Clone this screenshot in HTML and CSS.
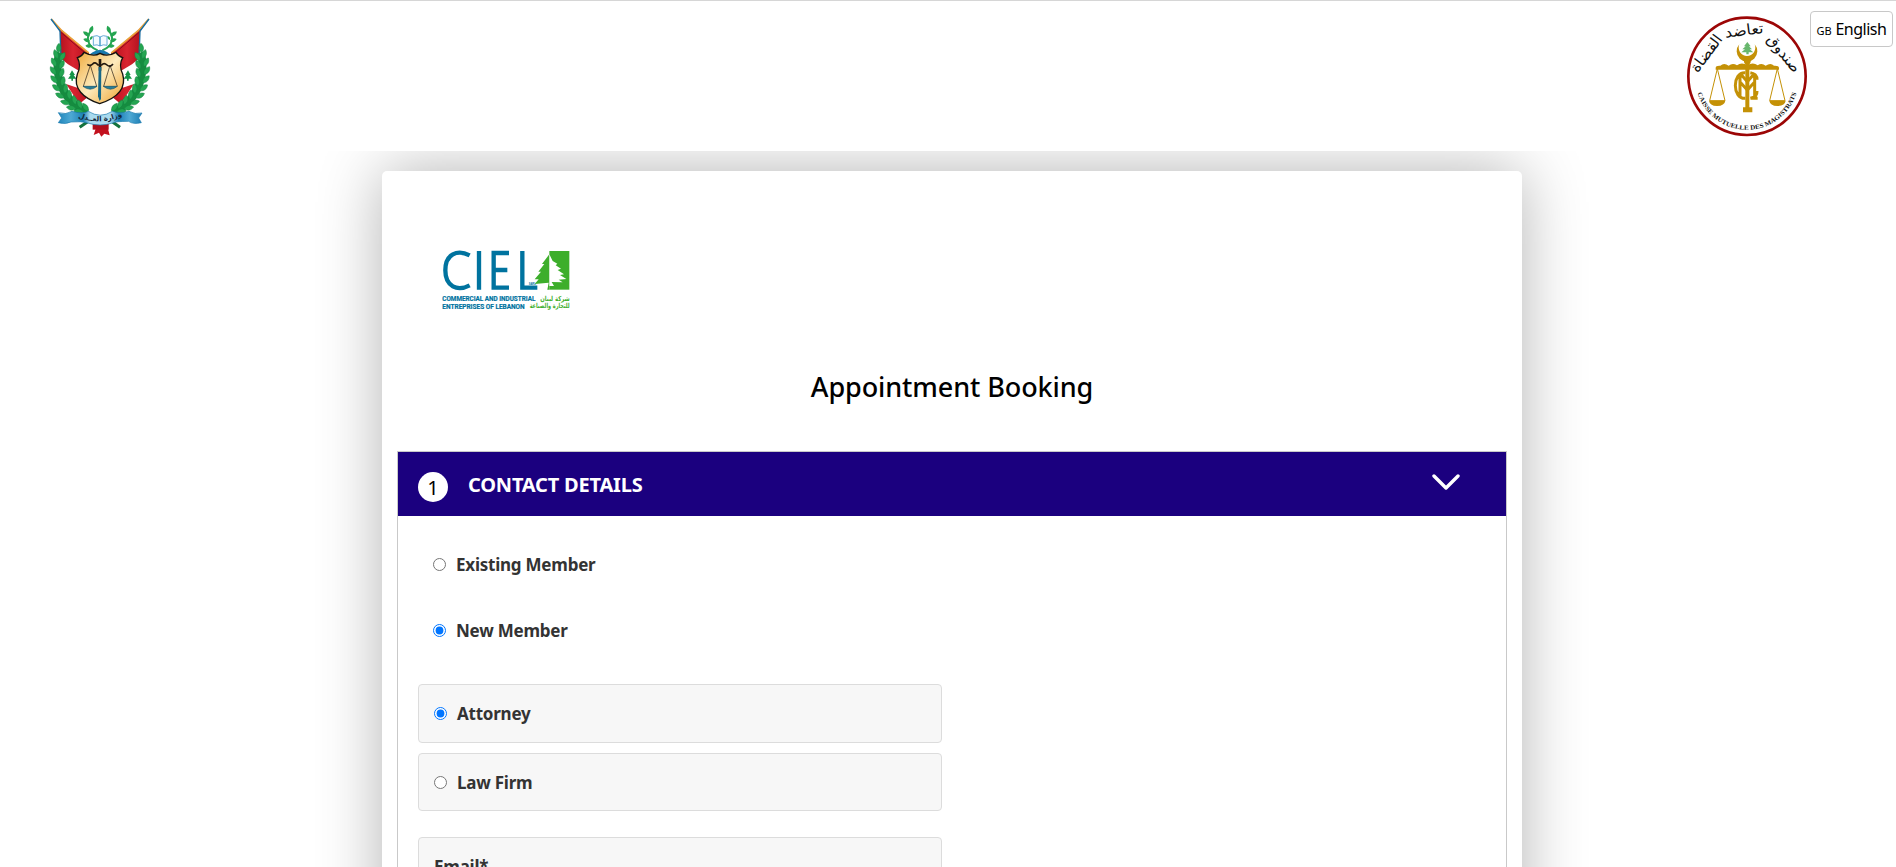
FILE: index.html
```
<!DOCTYPE html>
<html lang="en">
<head>
<meta charset="utf-8">
<title>Appointment Booking</title>
<link rel="stylesheet" href="styles.css">
</head>
<body>
<header class="topbar">
  <svg class="ministry" viewBox="0 0 360 405" aria-label="Ministry of Justice">
    <defs>
      <linearGradient id="gold" x1="0" y1="0" x2="1" y2="1"><stop offset="0" stop-color="#f0a93a"/><stop offset=".5" stop-color="#fdebbd"/><stop offset="1" stop-color="#efa22e"/></linearGradient>
      <linearGradient id="red" x1="0" y1="0" x2="1" y2="0"><stop offset="0" stop-color="#a80d19"/><stop offset=".5" stop-color="#d82430"/><stop offset="1" stop-color="#b40e1c"/></linearGradient>
      <linearGradient id="ribbon" x1="0" y1="0" x2="1" y2="0"><stop offset="0" stop-color="#2187bd"/><stop offset=".15" stop-color="#4ea9d4"/><stop offset=".3" stop-color="#1d80b6"/><stop offset=".38" stop-color="#a9daee"/><stop offset=".62" stop-color="#a9daee"/><stop offset=".72" stop-color="#1d80b6"/><stop offset=".85" stop-color="#4ea9d4"/><stop offset="1" stop-color="#1c7db4"/></linearGradient>
      <path id="leaf" d="M0 12C-9 3-9-8 0-17C9-8 9 3 0 12Z"/>
      <g id="half">
        <path d="M48 46L62 60L146 132L150 150L148 260L118 285L62 200L60 70Z" fill="url(#red)"/>
        <path d="M62 148L84 166L114 184L112 236L62 220Z" fill="#fff"/>
        <path d="M34 30L62 62L146 132" fill="none" stroke="#e9a23a" stroke-width="5"/>
        <path d="M60 68L142 138" fill="none" stroke="#8c0f18" stroke-width="3"/>
        <path d="M33 30L60 66L63 150" fill="none" stroke="#166da2" stroke-width="4"/>
        <path d="M96 184L88 198H92L84 209H94V215H99V209H109L101 198H105Z" fill="#159447"/>
        <path d="M57 130C44 190 56 265 140 312" fill="none" stroke="#168c3f" stroke-width="24"/>
        <g fill="#24a551" stroke="#128541" stroke-width="1.5" transform="translate(5 0)">
          <use href="#leaf" transform="translate(51 120) rotate(4)"/>
          <use href="#leaf" transform="translate(44 138) rotate(-20)"/><use href="#leaf" transform="translate(61 145) rotate(30)"/>
          <use href="#leaf" transform="translate(38 162) rotate(-28)"/><use href="#leaf" transform="translate(59 169) rotate(26)"/>
          <use href="#leaf" transform="translate(36 187) rotate(-35)"/><use href="#leaf" transform="translate(59 194) rotate(20)"/>
          <use href="#leaf" transform="translate(39 213) rotate(-43)"/><use href="#leaf" transform="translate(63 219) rotate(12)"/>
          <use href="#leaf" transform="translate(46 238) rotate(-53)"/><use href="#leaf" transform="translate(71 241) rotate(5)"/>
          <use href="#leaf" transform="translate(57 261) rotate(-63)"/><use href="#leaf" transform="translate(83 259) rotate(-5)"/>
          <use href="#leaf" transform="translate(73 281) rotate(-73)"/><use href="#leaf" transform="translate(99 275) rotate(-15)"/>
          <use href="#leaf" transform="translate(91 297) rotate(-80)"/><use href="#leaf" transform="translate(115 288) rotate(-25)"/>
          <use href="#leaf" transform="translate(113 307) rotate(-85)"/><use href="#leaf" transform="translate(133 297) rotate(-35)"/>
        </g>
        <path d="M154 64C137 84 140 112 173 124" fill="none" stroke="#25a553" stroke-width="6"/>
        <g fill="#24a551"><use href="#leaf" transform="translate(153 64) rotate(20) scale(.85)"/><use href="#leaf" transform="translate(141 76) rotate(-55) scale(.85)"/><use href="#leaf" transform="translate(142 94) rotate(-70) scale(.75)"/><use href="#leaf" transform="translate(149 111) rotate(-85) scale(.75)"/><use href="#leaf" transform="translate(153 88) rotate(35) scale(.5)"/></g>
      </g>
    </defs>
    <use href="#half"/><use href="#half" transform="translate(360 0) scale(-1 1)"/>
    <path d="M160 82Q172 77 180 84Q189 77 201 82V109Q189 105 180 111Q172 105 160 109Z" fill="#f4fbff" stroke="#68acd8" stroke-width="3"/><path d="M180 84V111" stroke="#3993c7" stroke-width="4"/>
    <path d="M158 130Q180 115 202 130L215 139L180 135L145 139Z" fill="#1878ae"/>
    <path d="M112 146Q126 142 132 130Q160 145 180 133Q202 145 228 130Q235 142 248 146Q235 169 248 195C260 238 231 267 179 284C130 268 98 238 112 195Q125 169 112 146Z" fill="url(#gold)" stroke="#141310" stroke-width="4"/>
    <g fill="none" stroke="#21180f" stroke-width="5"><path d="M142 166Q151 173 158 165T174 168H185Q192 160 201 168T219 165"/><path d="M180 150V185" stroke-width="8"/><path d="M151 169L130 232M151 169L170 232M210 169L191 232M210 169L232 232" stroke-width="2"/></g>
    <path d="M176 174L184 174L183 270L179 276L174 262Z" fill="#176887"/><path d="M129 232H171Q151 249 129 232ZM190 232H232Q212 249 190 232Z" fill="#26809b" stroke="#114c65" stroke-width="2"/>
    <path d="M119 355L156 329M240 355L204 329" stroke="#14723d" stroke-width="9"/>
    <path d="M172 344L161 378L177 371L184 383L193 374L209 379L200 344Z" fill="#c3111e"/><path d="M158 344H206V362H158Z" fill="#b00f1b"/>
    <path d="M55 311Q78 318 96 307Q128 316 145 307Q181 330 217 307Q239 316 267 307Q285 317 306 312L296 327L304 341Q279 347 266 337Q227 337 218 342Q180 354 143 342Q124 336 93 339Q77 347 55 341L65 327Z" fill="url(#ribbon)" stroke="#1879ad" stroke-width="2"/>
    <path id="ministryLine" d="M117 326Q180 350 244 322" fill="none"/>
    <text class="ministry-name"><textPath href="#ministryLine" startOffset="50%" text-anchor="middle">وزارة العــدل</textPath></text>
  </svg>
  <svg class="mutual" viewBox="0 0 390 405" aria-label="Caisse Mutuelle des Magistrats">
    <defs><path id="arcBottom" d="M47 222A155 155 0 0 0 355 222"/></defs>
    <circle cx="201" cy="199" r="176" fill="#fff" stroke="#9c0606" stroke-width="8"/>
    <g class="arc-ar" text-anchor="middle">
      <text transform="translate(300 140) rotate(51)" textLength="132" lengthAdjust="spacingAndGlyphs">صندوق</text>
      <text transform="translate(194 76) rotate(-7)" textLength="116" lengthAdjust="spacingAndGlyphs">تعاضد</text>
      <text transform="translate(91 139) rotate(-53)" textLength="128" lengthAdjust="spacingAndGlyphs">القضاة</text>
    </g>
    <text class="arc-fr"><textPath href="#arcBottom" startOffset="50%" text-anchor="middle" textLength="396" lengthAdjust="spacingAndGlyphs">CAISSE MUTUELLE DES MAGISTRATS</textPath></text>
    <path d="M178 103A31 31 0 1 0 224 103A25 25 0 1 1 178 103Z" fill="#c49106"/>
    <path d="M202 96L192 109H197L187 118H195L184 127H199V133H206V127H220L209 118H216L207 109H212Z" fill="#68b76d"/>
    <g fill="#c49106"><circle cx="202" cy="154" r="10"/><path d="M107 174Q107 166 121 167Q132 157 146 167Q158 157 171 166Q184 155 202 165Q220 155 233 166Q245 157 257 167Q272 157 282 167Q297 166 297 174V179H107Z"/><path d="M196 160H208V292H217V307H189V292H196Z"/><path d="M87 272H136Q134 287 111 288Q89 287 87 272ZM268 272H317Q315 287 292 288Q270 287 268 272Z"/></g>
    <g fill="none" stroke="#c49106" stroke-width="3"><path d="M112 176L89 272H135L112 176M292 176L269 272H315L292 176"/></g>
    <g fill="none" stroke="#c49106" stroke-width="9"><path d="M196 188C156 185 156 268 196 265M180 190V263M224 190V265M180 190L202 215L224 190M180 216L202 240L224 216M211 188Q232 192 231 209M211 265Q232 261 231 243M215 265H233"/></g>
  </svg>
  <button class="language" type="button"><small>GB</small> English</button>
</header>
<main class="page">
  <section class="card">
    <svg class="ciel" viewBox="0 0 510 255" aria-label="CIEL">
      <g fill="none" stroke="#00739f" stroke-width="13"><path d="M149 61C112 42 76 57 76 106C76 155 112 170 149 151"/><path d="M177 48V164M267 54H221V158H267M221 105H262M307 48V158H352"/></g>
      <path d="M388 48H448V164H388Z" fill="#3dae2b"/>
      <path d="M388 58L366 87H373L355 110H363L344 133H356L344 147L386 143L382 164H388Z" fill="#3dae2b"/>
      <path d="M388 58L398 78L412 86L407 91L423 101L413 105L432 118L420 120L439 132L416 134L428 142L395 141L402 153H388Z" fill="#fff"/>
      <text class="sarl" x="326" y="151">SARL</text>
      <g class="ciel-en"><text x="67" y="198" textLength="279" lengthAdjust="spacingAndGlyphs">COMMERCIAL AND INDUSTRIAL</text><text x="67" y="221" textLength="247" lengthAdjust="spacingAndGlyphs">ENTREPRISES OF LEBANON</text></g>
      <g class="ciel-ar"><text x="449" y="197" textLength="88" lengthAdjust="spacingAndGlyphs" direction="rtl">شركة لبنان</text><text x="449" y="220" textLength="120" lengthAdjust="spacingAndGlyphs" direction="rtl">للتجارة والصناعة</text></g>
    </svg>
    <h1 class="title">Appointment Booking</h1>
    <div class="panel">
      <div class="panel-head">
        <span class="step">1</span><h2 class="panel-title">CONTACT DETAILS</h2>
        <svg class="chevron" viewBox="0 0 28 18"><path d="M2 3L14 15L26 3" fill="none" stroke="#fff" stroke-width="3.4" stroke-linecap="round" stroke-linejoin="round"/></svg>
      </div>
      <div class="panel-body">
        <label class="choice"><input type="radio" name="member"><span>Existing Member</span></label>
        <label class="choice"><input type="radio" name="member" checked><span>New Member</span></label>
        <label class="box first"><input type="radio" name="kind" checked><span>Attorney</span></label>
        <label class="box second"><input type="radio" name="kind"><span>Law Firm</span></label>
        <div class="box email"><span>Email*</span></div>
      </div>
    </div>
  </section>
</main>
</body>
</html>
```
FILE: styles.css
```
* { box-sizing: border-box; }
html, body { height: 100%; }
body { margin: 0; overflow: hidden; background: #fff; color: #000; font-family: "Noto Sans", "Open Sans", sans-serif; }
.topbar { display: flex; height: 151px; padding: 7px 3px 0 40px; border-top: 1px solid #d6d6d6; }
.ministry { width: 120px; height: 135px; margin-top: 1px; }
.mutual { width: 130px; height: 135px; margin: 2px 0 0 auto; }
.language { flex: none; width: 83px; height: 36px; margin: 3px 0 0; padding: 0; border: 1px solid #c8c8c8; border-radius: 4px; background: #fff; color: #000; font: 16px "Noto Sans", sans-serif; letter-spacing: -.5px; white-space: nowrap; }
.language small { font-size: 11px; letter-spacing: 0; }
.ministry-name { font: bold 21px "DejaVu Sans", sans-serif; fill: #14283a; }
.arc-ar { font: 45px "DejaVu Sans", sans-serif; fill: #111; }
.arc-fr { font: bold 19px "Liberation Serif", serif; fill: #111; }
.page { height: 716px; padding: 20px 0 0 382px; overflow: hidden; }
.card { width: 1140px; height: 1000px; padding: 64px 15px 0; border-radius: 5px; background: #fff; box-shadow: 0 0 64px rgba(0, 0, 0, .3); }
.ciel { display: block; width: 170px; height: 85px; margin-left: 23px; }
.sarl { font: bold 8px "Liberation Sans", sans-serif; fill: #00739f; }
.ciel-en { font: bold 20px Roboto, sans-serif; fill: #00739f; stroke: #00739f; stroke-width: .6px; }
.ciel-ar { font: bold 21px "DejaVu Sans", sans-serif; fill: #3dae2b; }
.title { height: 40px; margin: 47px 0 44px; font-size: 27px; font-weight: 500; line-height: 40px; letter-spacing: -.1px; text-align: center; }
.panel { height: 700px; border: 1px solid #c9c9c9; }
.panel-head { display: flex; align-items: flex-start; height: 64px; padding: 20px 46px 0 20px; background: #1b007f; color: #fff; }
.step { width: 30px; height: 30px; border-radius: 50%; background: #fff; color: #000; font-size: 20px; line-height: 31px; text-align: center; }
.panel-title { margin: -2px 0 0 20px; font-size: 20px; font-weight: 700; line-height: 30px; letter-spacing: -.2px; }
.chevron { width: 28px; height: 18px; margin: 1px 0 0 auto; }
.panel-body { display: flex; flex-direction: column; padding: 15px 20px 0; color: #333; font-size: 17px; font-weight: 700; letter-spacing: -.23px; }
.choice { display: flex; align-items: center; height: 66px; padding-left: 15px; }
input { flex: none; width: 13px; height: 13px; margin: 0 10px 0 0; }
.box { display: flex; align-items: center; width: 524px; height: 59px; padding-left: 15px; border: 1px solid #dcdcdc; border-radius: 4px; background: #f7f7f7; }
.first { margin-top: 21px; }
.second { margin-top: 10px; height: 58px; }
.email { margin-top: 26px; }
```
